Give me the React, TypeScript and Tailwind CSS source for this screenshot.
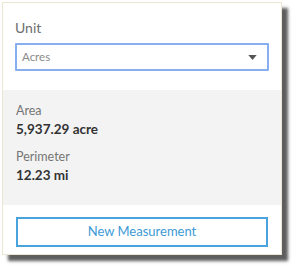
import React from "react";

export default function App() {
  return (
    <div className="w-[294px] h-[266px] bg-white pl-[2px] pt-[2px]" style={{ fontFamily: "Lato, 'Noto Sans', sans-serif" }}>
      <div className="w-[280px] h-[253px] bg-white border border-[#ebe7d2] shadow-[6px_6px_3px_rgba(40,40,40,0.75)] flex flex-col">
        <div className="px-[12px] pt-[16px] pb-[19px] flex flex-col">
          <div className="text-[14px] leading-[18px] text-[#6e6e6e]">Unit</div>
          <div className="mt-[6px] h-[28px] border-2 border-[#86aef0] rounded-[1px] flex items-center justify-between pl-[5px] pr-[10px]">
            <span className="text-[11.5px] text-[#8a8a8a]">Acres</span>
            <svg width="9" height="5" viewBox="0 0 10 6"><path d="M0 0 L10 0 L5 6 Z" fill="#555" /></svg>
          </div>
        </div>
        <div className="bg-[#f3f3f3] h-[115px] px-[13px] pt-[12px] flex flex-col">
          <div className="text-[12.5px] leading-[18px] text-[#757575]">Area</div>
          <div className="text-[13.5px] leading-[18px] font-bold text-[#333]">5,937.29 acre</div>
          <div className="mt-[10px] text-[12.5px] leading-[18px] text-[#757575]">Perimeter</div>
          <div className="text-[13.5px] leading-[18px] font-bold text-[#333]">12.23 mi</div>
        </div>
        <div className="px-[13px] pt-[12px]">
          <div className="h-[30px] border-2 border-[#4aa3dc] flex items-center justify-center text-[13px] text-[#3d9ad6]">
            New Measurement
          </div>
        </div>
      </div>
    </div>
  );
}
